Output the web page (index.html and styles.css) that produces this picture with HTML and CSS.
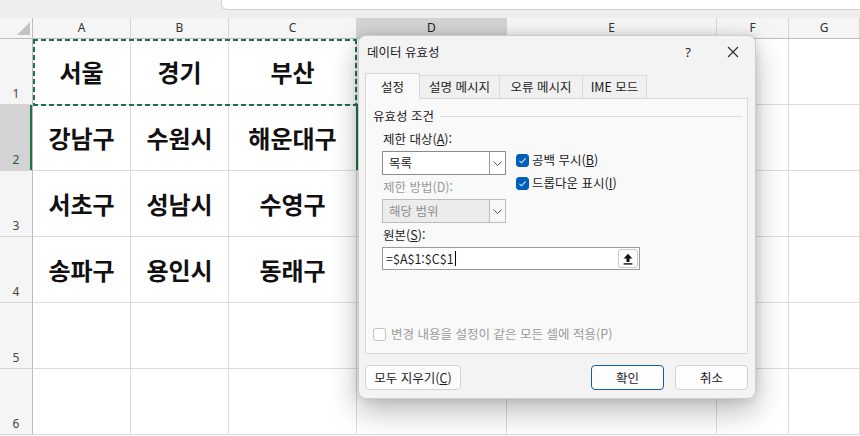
FILE: index.html
```html
<!DOCTYPE html>
<html lang="ko">
<head>
<meta charset="utf-8">
<title>데이터 유효성</title>
<link rel="stylesheet" href="styles.css">
</head>
<body>
<div class="app">
  <div class="topbar"><div class="formula-box"></div></div>
  <div class="sheet">
    <div class="row hdr">
      <div class="corner"><svg width="33" height="20" viewBox="0 0 33 20"><polygon points="30,4 30,17 17,17" fill="#c2c2c2"/></svg></div>
      <div>A</div><div>B</div><div>C</div><div class="sel">D</div><div>E</div><div>F</div><div>G</div>
    </div>
    <div class="row r">
      <div class="rh">1</div>
      <div class="range">
        <div class="c">서울</div><div class="c">경기</div><div class="c">부산</div>
      </div>
      <div class="c"></div><div class="c"></div><div class="c"></div><div class="c"></div>
    </div>
    <div class="row r">
      <div class="rh sel">2</div>
      <div class="c">강남구</div><div class="c">수원시</div><div class="c">해운대구</div>
      <div class="c active"></div><div class="c"></div><div class="c"></div><div class="c"></div>
    </div>
    <div class="row r">
      <div class="rh">3</div>
      <div class="c">서초구</div><div class="c">성남시</div><div class="c">수영구</div>
      <div class="c"></div><div class="c"></div><div class="c"></div><div class="c"></div>
    </div>
    <div class="row r">
      <div class="rh">4</div>
      <div class="c">송파구</div><div class="c">용인시</div><div class="c">동래구</div>
      <div class="c"></div><div class="c"></div><div class="c"></div><div class="c"></div>
    </div>
    <div class="row r">
      <div class="rh">5</div>
      <div class="c"></div><div class="c"></div><div class="c"></div>
      <div class="c"></div><div class="c"></div><div class="c"></div><div class="c"></div>
    </div>
    <div class="row r">
      <div class="rh">6</div>
      <div class="c"></div><div class="c"></div><div class="c"></div>
      <div class="c"></div><div class="c"></div><div class="c"></div><div class="c"></div>
    </div>
  </div>

  <div class="dialog">
    <div class="titlebar">
      <span class="title">데이터 유효성</span>
      <span class="help">?</span>
      <span class="close"><svg width="12" height="12" viewBox="0 0 12 12"><path d="M1 1 L11 11 M11 1 L1 11" stroke="#2b2b2b" stroke-width="1.1" fill="none"/></svg></span>
    </div>
    <div class="tabs">
      <div class="tab active">설정</div>
      <div class="tab w2">설명 메시지</div>
      <div class="tab w3">오류 메시지</div>
      <div class="tab w4">IME 모드</div>
    </div>
    <div class="panel">
      <div class="group-title"><span>유효성 조건</span><i class="rule"></i></div>
      <div class="group-body">
        <div class="criteria">
          <div class="left">
            <div class="label">제한 대상(<u>A</u>):</div>
            <div class="select"><span class="val">목록</span><span class="arrow"><svg width="9" height="5" viewBox="0 0 9 5"><path d="M0.5 0.5 L4.5 4.5 L8.5 0.5" stroke="#555" stroke-width="1" fill="none"/></svg></span></div>
            <div class="label disabled">제한 방법(D):</div>
            <div class="select disabled"><span class="val">해당 범위</span><span class="arrow"><svg width="9" height="5" viewBox="0 0 9 5"><path d="M0.5 0.5 L4.5 4.5 L8.5 0.5" stroke="#555" stroke-width="1" fill="none"/></svg></span></div>
          </div>
          <div class="right">
            <div class="check"><span class="box checked"><svg width="13" height="13" viewBox="0 0 13 13"><path d="M3.5 6.8 L5.6 8.8 L9.6 4.4" stroke="#d6ecff" stroke-width="1.1" fill="none"/></svg></span><span class="txt">공백 무시(<u>B</u>)</span></div>
            <div class="check"><span class="box checked"><svg width="13" height="13" viewBox="0 0 13 13"><path d="M3.5 6.8 L5.6 8.8 L9.6 4.4" stroke="#d6ecff" stroke-width="1.1" fill="none"/></svg></span><span class="txt">드롭다운 표시(<u>I</u>)</span></div>
          </div>
        </div>
        <div class="label src-label">원본(<u>S</u>):</div>
        <div class="source">
          <span class="val">=$A$1:$C$1</span><span class="caret"></span>
          <span class="pick"><svg width="10" height="12" viewBox="0 0 10 12"><path d="M5 0.8 L9.4 5.4 H6.5 V9 H3.5 V5.4 H0.6 Z" fill="#111"/><rect x="0.6" y="10.2" width="8.8" height="1.4" fill="#111"/></svg></span>
        </div>
      </div>
      <div class="apply-all"><span class="box"></span><span class="txt">변경 내용을 설정이 같은 모든 셀에 적용(P)</span></div>
    </div>
    <div class="buttons">
      <button class="btn clear">모두 지우기(<u>C</u>)</button>
      <span class="spacer"></span>
      <button class="btn ok">확인</button>
      <button class="btn cancel">취소</button>
    </div>
  </div>
</div>
</body>
</html>
```

FILE: styles.css
```css
* { box-sizing: border-box; margin: 0; padding: 0; }
html, body { width: 860px; height: 436px; overflow: hidden; }
body {
  font-family: "Noto Sans CJK KR", "Noto Sans", sans-serif;
  font-size: 12px;
  color: #1b1b1b;
  background: #fff;
}
.app { position: relative; width: 860px; height: 436px; }

.topbar { height: 18px; background: #eeeeee; padding-left: 221px; }
.formula-box {
  height: 10px; background: #fff;
  border-left: 1px solid #d2d2d2; border-bottom: 1px solid #d2d2d2;
  border-bottom-left-radius: 6px;
}

.row { display: grid; grid-template-columns: 33px 98px 98px 128px 150px 210px 72px 71px; }
.hdr { height: 21px; background: #f5f5f5; border-bottom: 1px solid #bdbdbd; }
.hdr > div {
  border-right: 1px solid #d6d6d6;
  text-align: center;
  font-family: "Noto Sans", sans-serif;
  font-size: 12px; line-height: 20px; color: #333;
}
.hdr > .corner { border-right: 1px solid #bdbdbd; }
.corner svg { display: block; }
.hdr > .sel { background: #d3d3d3; color: #222; }

.r { height: 66px; }
.rh {
  background: #f5f5f5;
  border-right: 1px solid #bdbdbd;
  border-bottom: 1px solid #d6d6d6;
  display: flex; align-items: flex-end; justify-content: center;
  font-family: "Noto Sans", sans-serif;
  font-size: 12px; line-height: 16px; padding-bottom: 2px; color: #444;
}
.rh.sel { background: #d3d3d3; color: #1d5e36; box-shadow: inset -2px 0 #217346; }

.c {
  border-right: 1px solid #dcdcdc;
  border-bottom: 1px solid #dcdcdc;
  display: flex; align-items: center; justify-content: center;
  font-size: 24px; font-weight: 700; color: #111;
}
.range {
  grid-column: span 3;
  display: grid; grid-template-columns: 98px 98px 128px;
  position: relative;
}
.range::after {
  content: ""; position: absolute; left: 0; top: 0; right: 0; bottom: -1px;
  background:
    repeating-linear-gradient(90deg, #217346 0 5px, transparent 5px 8px) top left / 100% 2px no-repeat,
    repeating-linear-gradient(90deg, #217346 0 5px, transparent 5px 8px) bottom left / 100% 2px no-repeat,
    repeating-linear-gradient(180deg, #217346 0 5px, transparent 5px 8px) top left / 2px 100% no-repeat,
    repeating-linear-gradient(180deg, #217346 0 5px, transparent 5px 8px) top right / 2px 100% no-repeat;
}
.c.active { position: relative; }
.c.active::after {
  content: ""; position: absolute; left: -1px; top: -1px; right: 0; bottom: 0;
  border: 2px solid #217346;
}

/* dialog */
.dialog {
  position: absolute; left: 358px; top: 35px;
  width: 398px; height: 364px;
  background: #f3f3f3;
  border: 1px solid #cdcdcd;
  border-radius: 8px;
  box-shadow: 0 12px 30px rgba(0,0,0,0.28), 0 0 8px rgba(0,0,0,0.12);
  display: flex; flex-direction: column;
  padding: 0 7px 0 6px;
  overflow: hidden;
  font-size: 12.5px;
}
.titlebar {
  height: 31px; margin: 0 -7px 0 -6px;
  display: flex; align-items: center;
  padding-left: 8px;
}
.title { flex: 1; font-size: 12.5px; line-height: 16px; }
.help { width: 20px; text-align: center; font-family: "Noto Sans", sans-serif; font-size: 13px; margin-right: 20px; color: #222; }
.close { width: 30px; margin-right: 7px; display: flex; justify-content: center; }
.close svg { display: block; }

.tabs { margin-top: 8px; height: 23px; display: flex; align-items: flex-end; position: relative; z-index: 1; }
.tab {
  height: 23px; width: 55px;
  border: 1px solid #d9d9d9; border-bottom: none;
  background: #f0f0f0;
  text-align: center; line-height: 21px; font-size: 12.5px;
  margin-left: -1px; color: #1b1b1b;
}
.tab:first-child { margin-left: 0; }
.tab.active { height: 26px; margin-bottom: -1px; background: #f9f9f9; padding-top: 2px; }
.tab.w2 { width: 81px; }
.tab.w3 { width: 84px; }
.tab.w4 { width: 65px; }

.panel {
  height: 256px;
  border: 1px solid #d9d9d9;
  background: #f9f9f9;
  display: flex; flex-direction: column;
  padding: 0 5px 11px 7px;
}
.group-title { margin-top: 9px; height: 16px; line-height: 16px; display: flex; align-items: center; }
.rule { flex: 1; height: 1px; background: #dcdcdc; margin-left: 6px; }
.group-body { margin-left: 9px; }
.criteria { margin-top: 7px; display: flex; gap: 10px; }
.left { width: 124px; }
.label { height: 16px; line-height: 16px; padding-left: 1px; }
.label.disabled { color: #9a9a9a; margin-top: 4px; }
.select {
  margin-top: 4px; height: 24px;
  border: 1px solid #8c8c8c; background: #fff;
  display: flex;
}
.select .val { flex: 1; padding-left: 6px; line-height: 22px; font-size: 12.5px; }
.select .arrow { width: 16px; border-left: 1px solid #9a9a9a; display: flex; align-items: center; justify-content: center; }
.select .arrow svg { display: block; }
.select.disabled { background: #ececec; border-color: #bcbcbc; color: #8e8e8e; }
.select.disabled .arrow { border-left-color: #bcbcbc; background: #f7f7f7; }

.right { margin-top: 21px; display: flex; flex-direction: column; gap: 7px; }
.check { height: 16px; line-height: 16px; display: flex; align-items: center; gap: 3px; }
.box {
  width: 13px; height: 13px; border-radius: 3px;
  border: 1px solid #c2c2c2; background: #fdfdfd;
  display: inline-block; flex: none;
}
.box.checked { background: #005fb8; border-color: #005fb8; }
.box.checked svg { display: block; margin: -1px; }

.src-label { margin-top: 4px; }
.source {
  margin-top: 4px; width: 258px; height: 23px;
  border: 1px solid #9a9a9a; background: #fff;
  display: flex; align-items: center;
}
.source .val { padding-left: 3px; line-height: 16px; font-size: 12.5px; }
.caret { width: 1px; height: 15px; background: #000; margin-left: 1px; }
.pick {
  margin-left: auto; margin-right: 1px;
  width: 20px; height: 19px;
  border: 1px solid #c8c8c8; border-radius: 3px; background: #fff;
  display: flex; align-items: center; justify-content: center;
}
.pick svg { display: block; }

.apply-all {
  margin-top: auto; height: 16px; line-height: 16px;
  display: flex; align-items: center; gap: 5px;
  color: #9a9a9a;
}

.buttons { margin-top: 11px; height: 25px; display: flex; }
.btn {
  height: 25px; border: 1px solid #d1d1d1; border-radius: 4px;
  background: #fdfdfd;
  font-family: "Noto Sans CJK KR", "Noto Sans", sans-serif;
  font-size: 12.5px; color: #1b1b1b; line-height: 16px;
}
.btn.clear { width: 96px; }
.spacer { flex: 1; }
.btn.ok { width: 73px; border-color: #1c5a94; }
.btn.cancel { width: 73px; margin-left: 11px; }
```
